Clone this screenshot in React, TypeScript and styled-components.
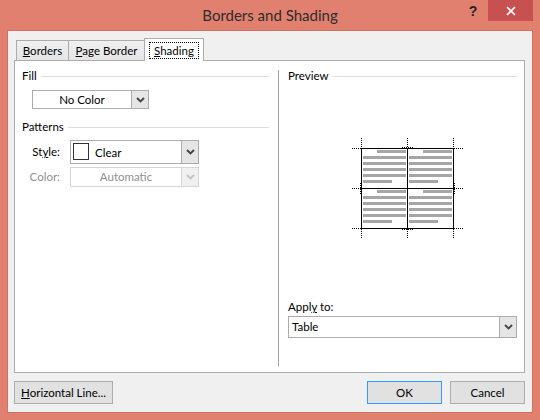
import styled, { createGlobalStyle } from 'styled-components';

const GlobalStyle = createGlobalStyle`
  html, body {
    margin: 0;
    padding: 0;
  }
  body {
    font-family: Lato, "Liberation Sans", sans-serif;
    font-size: 11.5px;
    color: #000;
  }
  * {
    box-sizing: border-box;
  }
`;

const Window = styled.div`
  width: 540px;
  height: 420px;
  background: #e1806e;
  display: flex;
  flex-direction: column;
`;

const TitleBar = styled.div`
  height: 30px;
  display: grid;
  grid-template-columns: 1fr auto 1fr;
`;

const Title = styled.div`
  grid-column: 2;
  align-self: center;
  font-size: 15px;
  color: #2d2d2d;
`;

const Controls = styled.div`
  grid-column: 3;
  justify-self: end;
  align-self: start;
  display: flex;
  padding-right: 7px;
`;

const HelpButton = styled.div`
  width: 30px;
  height: 21px;
  display: flex;
  align-items: center;
  justify-content: center;
  font-family: "Liberation Sans", sans-serif;
  font-weight: 700;
  font-size: 14px;
  color: #262626;
`;

const CloseButton = styled.div`
  width: 45px;
  height: 21px;
  background: #c75050;
  display: flex;
  align-items: center;
  justify-content: center;
`;

const Client = styled.div`
  flex: 1;
  margin: 0 7px 7px;
  background: #f0f0f0;
  border: 1px solid #cf7361;
  display: flex;
  flex-direction: column;
  padding: 7px 7px 8px 6px;
`;

const TabStrip = styled.div`
  display: flex;
  align-items: flex-end;
  height: 23px;
  padding-left: 2px;
  margin-bottom: -1px;
  position: relative;
  z-index: 1;
`;

const Tab = styled.div<{ $active?: boolean; $width: number }>`
  width: ${p => p.$width}px;
  height: ${p => (p.$active ? 23 : 20)}px;
  margin-bottom: ${p => (p.$active ? 0 : 1)}px;
  border: 1px solid #acacac;
  border-bottom: none;
  background: ${p => (p.$active ? '#fff' : 'linear-gradient(#f0f0f0, #e5e5e5)')};
  display: flex;
  align-items: center;
  justify-content: center;
  line-height: 14px;
  position: relative;
  z-index: ${p => (p.$active ? 2 : 1)};
  & + & {
    margin-left: -1px;
  }
`;

const FocusLabel = styled.span`
  border: 1px dotted #000;
  padding: 1px 4px;
  line-height: 13px;
`;

const Key = styled.span`
  text-decoration: underline;
  text-underline-offset: 1px;
`;

const Panel = styled.div`
  flex: 1;
  background: #fff;
  border: 1px solid #acacac;
  display: grid;
  grid-template-columns: 263px 1px 1fr;
`;

const LeftCol = styled.div`
  padding: 8px 9px 0 7px;
  display: flex;
  flex-direction: column;
`;

const RightCol = styled.div`
  padding: 8px 7px 34px 9px;
  display: flex;
  flex-direction: column;
`;

const Divider = styled.div`
  background: #a0a0a0;
  margin: 9px 0 6px;
`;

const SectionHeader = styled.div<{ $top?: number }>`
  display: flex;
  align-items: center;
  gap: 4px;
  line-height: 14px;
  margin-top: ${p => p.$top || 0}px;
`;

const HeaderRule = styled.div`
  flex: 1;
  height: 1px;
  background: #dcdcdc;
`;

const ComboBox = styled.div<{ $width?: number; $height: number; $disabled?: boolean }>`
  width: ${p => (p.$width ? `${p.$width}px` : '100%')};
  height: ${p => p.$height}px;
  border: 1px solid ${p => (p.$disabled ? '#d5d5d5' : '#acacac')};
  background: #fff;
  display: flex;
  color: ${p => (p.$disabled ? '#8f8f8f' : '#000')};
`;

const ComboValue = styled.div<{ $align?: 'left' | 'center' }>`
  flex: 1;
  display: flex;
  align-items: center;
  justify-content: ${p => (p.$align === 'left' ? 'flex-start' : 'center')};
  padding-left: ${p => (p.$align === 'left' ? 3 : 0)}px;
  line-height: 14px;
`;

const ComboArrow = styled.div<{ $disabled?: boolean }>`
  width: 17px;
  border-left: 1px solid ${p => (p.$disabled ? '#d5d5d5' : '#acacac')};
  background: ${p => (p.$disabled ? '#f0f0f0' : '#e5e5e5')};
  display: flex;
  align-items: center;
  justify-content: center;
`;

const FillCombo = styled.div`
  margin: 7px 0 0 10px;
`;

const FormGrid = styled.div`
  margin-top: 6px;
  display: grid;
  grid-template-columns: 38px 129px;
  column-gap: 10px;
  row-gap: 3px;
  align-items: center;
`;

const FieldLabel = styled.div<{ $disabled?: boolean }>`
  text-align: right;
  line-height: 14px;
  color: ${p => (p.$disabled ? '#8f8f8f' : '#000')};
`;

const StyleValue = styled.div`
  flex: 1;
  display: flex;
  align-items: flex-start;
  padding-left: 2px;
`;

const Swatch = styled.div`
  width: 16px;
  height: 17px;
  margin-top: 2px;
  border: 1px solid #333;
  background: #fff;
`;

const SwatchText = styled.span`
  padding: 5px 0 0 6px;
  line-height: 14px;
`;

const PreviewArt = styled.svg`
  display: block;
  margin-top: 45px;
`;

const ApplyGroup = styled.div`
  margin-top: auto;
  display: flex;
  flex-direction: column;
  gap: 2px;
`;

const ApplyLabel = styled.div`
  line-height: 14px;
`;

const Footer = styled.div`
  display: flex;
  gap: 8px;
  padding-top: 8px;
`;

const Button = styled.button<{ $width: number; $primary?: boolean }>`
  width: ${p => p.$width}px;
  height: 23px;
  padding: 0;
  border: 1px solid ${p => (p.$primary ? '#3399ff' : '#adadad')};
  background: #e1e1e1;
  font: inherit;
  color: #000;
  line-height: 14px;
`;

const Spacer = styled.div`
  flex: 1;
`;

function Chevron({ disabled }: { disabled?: boolean }) {
  return (
    <svg width="9" height="6" viewBox="0 0 9 6">
      <polyline
        points="1,1 4.5,4.5 8,1"
        fill="none"
        stroke={disabled ? '#c2c2c2' : '#444'}
        strokeWidth="1.9"
      />
    </svg>
  );
}

function Combo({
  width,
  height,
  disabled,
  align,
  children,
}: {
  width?: number;
  height: number;
  disabled?: boolean;
  align?: 'left' | 'center';
  children: React.ReactNode;
}) {
  return (
    <ComboBox $width={width} $height={height} $disabled={disabled}>
      {typeof children === 'string' ? <ComboValue $align={align}>{children}</ComboValue> : children}
      <ComboArrow $disabled={disabled}>
        <Chevron disabled={disabled} />
      </ComboArrow>
    </ComboBox>
  );
}

// text lines inside a preview cell: [x offset, width]
const cellLines: [number, number][] = [
  [14, 29],
  [0, 43],
  [0, 43],
  [0, 43],
  [0, 43],
  [0, 29],
];

function TablePreview() {
  const cols = [75, 121];
  const rows = [22, 62];
  const dot = { stroke: '#000', strokeWidth: 1, strokeDasharray: '1 1' };
  return (
    <PreviewArt width="229" height="120" viewBox="0 0 229 120">
      {rows.map(ry =>
        cols.map(cx =>
          cellLines.map(([dx, w], i) => (
            <rect key={`${ry}-${cx}-${i}`} x={cx + dx} y={ry + i * 6} width={w} height={3} fill="#a6a6a6" />
          )),
        ),
      )}
      <rect x="73.5" y="20.5" width="92" height="80" fill="none" stroke="#000" />
      <line x1="119.5" y1="20" x2="119.5" y2="101" stroke="#000" />
      <line x1="73" y1="60.5" x2="166" y2="60.5" stroke="#000" />
      {[73.5, 119.5, 165.5].map(x => (
        <g key={x}>
          <line x1={x} y1="10" x2={x} y2="20" {...dot} />
          <line x1={x} y1="101" x2={x} y2="111" {...dot} />
        </g>
      ))}
      {[20.5, 60.5, 100.5].map(y => (
        <g key={y}>
          <line x1="64" y1={y} x2="73" y2={y} {...dot} />
          <line x1="166" y1={y} x2="175" y2={y} {...dot} />
        </g>
      ))}
      <line x1="114" y1="19.5" x2="125" y2="19.5" {...dot} />
      <line x1="114" y1="101.5" x2="125" y2="101.5" {...dot} />
      <line x1="72.5" y1="55" x2="72.5" y2="66" {...dot} />
      <line x1="166.5" y1="55" x2="166.5" y2="66" {...dot} />
    </PreviewArt>
  );
}

export default function App() {
  return (
    <>
      <GlobalStyle />
      <Window>
        <TitleBar>
          <Title>Borders and Shading</Title>
          <Controls>
            <HelpButton>?</HelpButton>
            <CloseButton>
              <svg width="10" height="10" viewBox="0 0 10 10">
                <path d="M1 1 L9 9 M9 1 L1 9" stroke="#fff" strokeWidth="1.7" />
              </svg>
            </CloseButton>
          </Controls>
        </TitleBar>
        <Client>
          <TabStrip>
            <Tab $width={53}>
              <span>
                <Key>B</Key>orders
              </span>
            </Tab>
            <Tab $width={77}>
              <span>
                <Key>P</Key>age Border
              </span>
            </Tab>
            <Tab $width={60} $active>
              <FocusLabel>
                <Key>S</Key>hading
              </FocusLabel>
            </Tab>
          </TabStrip>
          <Panel>
            <LeftCol>
              <SectionHeader>
                <span>Fill</span>
                <HeaderRule />
              </SectionHeader>
              <FillCombo>
                <Combo width={117} height={19}>
                  No Color
                </Combo>
              </FillCombo>
              <SectionHeader $top={11}>
                <span>Patterns</span>
                <HeaderRule />
              </SectionHeader>
              <FormGrid>
                <FieldLabel>
                  St<Key>y</Key>le:
                </FieldLabel>
                <Combo height={24}>
                  <StyleValue>
                    <Swatch />
                    <SwatchText>Clear</SwatchText>
                  </StyleValue>
                </Combo>
                <FieldLabel $disabled>Color:</FieldLabel>
                <Combo height={20} disabled>
                  Automatic
                </Combo>
              </FormGrid>
            </LeftCol>
            <Divider />
            <RightCol>
              <SectionHeader>
                <span>Preview</span>
                <HeaderRule />
              </SectionHeader>
              <TablePreview />
              <ApplyGroup>
                <ApplyLabel>
                  Appl<Key>y</Key> to:
                </ApplyLabel>
                <Combo height={22} align="left">
                  Table
                </Combo>
              </ApplyGroup>
            </RightCol>
          </Panel>
          <Footer>
            <Button $width={99}>
              <Key>H</Key>orizontal Line...
            </Button>
            <Spacer />
            <Button $width={75} $primary>
              OK
            </Button>
            <Button $width={75}>Cancel</Button>
          </Footer>
        </Client>
      </Window>
    </>
  );
}
